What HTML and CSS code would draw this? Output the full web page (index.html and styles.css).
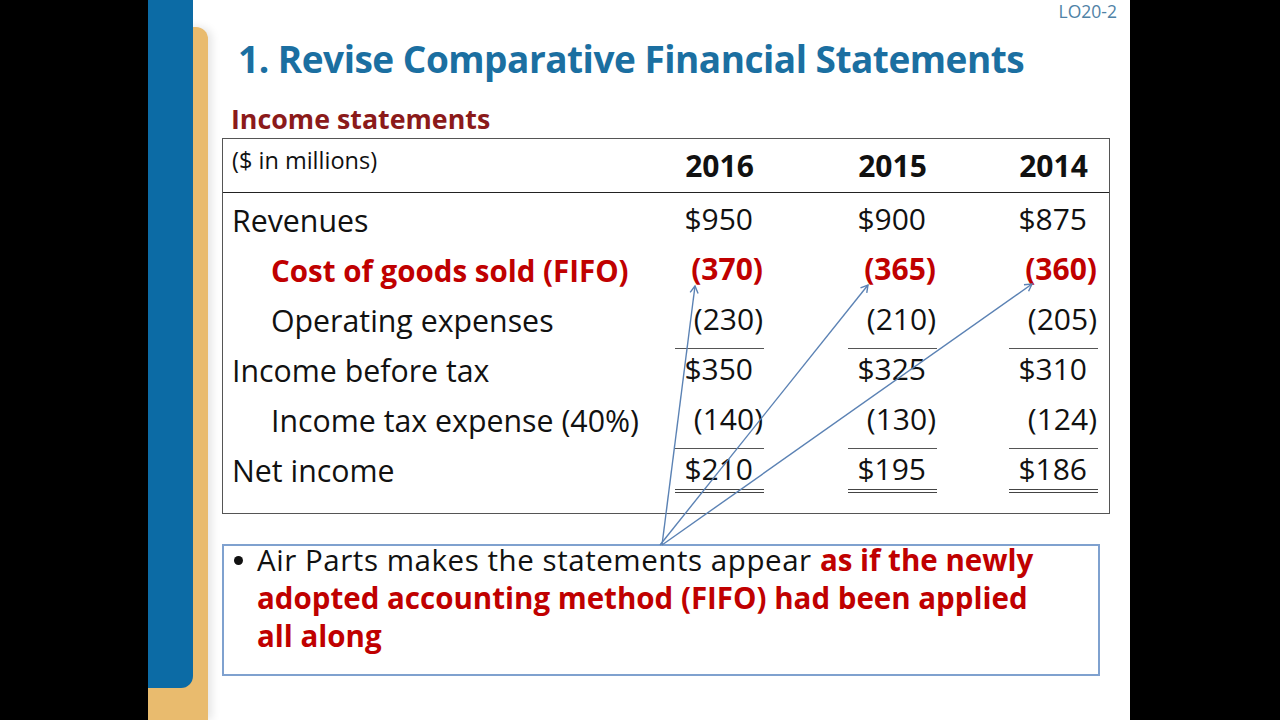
FILE: index.html
```html
<!DOCTYPE html>
<html>
<head>
<meta charset="utf-8">
<link rel="stylesheet" href="styles.css">
</head>
<body>
<div class="screen">
  <div class="bar-side"></div>
  <div class="slide">
    <div class="deco">
      <div class="deco-tan"></div>
      <div class="deco-blue"></div>
    </div>
    <div class="main">
      <div class="lo">LO20-2</div>
      <h1 class="title">1. Revise Comparative Financial Statements</h1>
      <h2 class="subtitle">Income statements</h2>
      <div class="table">
        <div class="thead grid">
          <div class="cell head-label">($ in millions)</div>
          <div class="cell year"><span class="num">2016</span></div>
          <div class="cell year"><span class="num">2015</span></div>
          <div class="cell year"><span class="num">2014</span></div>
        </div>
        <div class="tbody grid">
          <div class="cell label">Revenues</div>
          <div class="cell"><span class="num">$950</span></div>
          <div class="cell"><span class="num">$900</span></div>
          <div class="cell"><span class="num">$875</span></div>

          <div class="cell label indent red">Cost of goods sold (FIFO)</div>
          <div class="cell red"><span class="num">(370<span class="cp">)</span></span></div>
          <div class="cell red"><span class="num">(365<span class="cp">)</span></span></div>
          <div class="cell red"><span class="num">(360<span class="cp">)</span></span></div>

          <div class="cell label indent">Operating expenses</div>
          <div class="cell"><span class="num">(230<span class="cp">)</span></span></div>
          <div class="cell"><span class="num">(210<span class="cp">)</span></span></div>
          <div class="cell"><span class="num">(205<span class="cp">)</span></span></div>

          <div class="cell label">Income before tax</div>
          <div class="cell"><span class="num rule">$350</span></div>
          <div class="cell"><span class="num rule">$325</span></div>
          <div class="cell"><span class="num rule">$310</span></div>

          <div class="cell label indent">Income tax expense (40%)</div>
          <div class="cell"><span class="num">(140<span class="cp">)</span></span></div>
          <div class="cell"><span class="num">(130<span class="cp">)</span></span></div>
          <div class="cell"><span class="num">(124<span class="cp">)</span></span></div>

          <div class="cell label">Net income</div>
          <div class="cell"><span class="num rule dbl">$210</span></div>
          <div class="cell"><span class="num rule dbl">$195</span></div>
          <div class="cell"><span class="num rule dbl">$186</span></div>
        </div>
      </div>
      <div class="note">
        <p class="bullet"><span class="dot"></span><span class="btext">Air Parts makes the statements appear <b class="red">as if the newly<br>adopted accounting method (FIFO) had been applied<br>all along</b></span></p>
      </div>
    </div>
    <svg class="arrows" width="982" height="720" viewBox="148 0 982 720">
      <defs>
        <marker id="ah" markerWidth="10" markerHeight="10" refX="8" refY="5" orient="auto" markerUnits="userSpaceOnUse">
          <path d="M1,1 L8,5 L1,9" fill="none" stroke="#5b82b4" stroke-width="1.4"/>
        </marker>
      </defs>
      <line x1="662" y1="545" x2="695" y2="286" stroke="#5b82b4" stroke-width="1.4" marker-end="url(#ah)"/>
      <line x1="660" y1="545" x2="868" y2="285" stroke="#5b82b4" stroke-width="1.4" marker-end="url(#ah)"/>
      <line x1="662" y1="545" x2="1032" y2="284" stroke="#5b82b4" stroke-width="1.4" marker-end="url(#ah)"/>
    </svg>
  </div>
  <div class="bar-side right"></div>
</div>
</body>
</html>
```
FILE: styles.css
```css
html, body {
  margin: 0;
  padding: 0;
  background: #000;
}
.screen {
  display: flex;
  width: 1280px;
  height: 720px;
  overflow: hidden;
}
.bar-side {
  width: 148px;
  background: #000;
  flex: none;
}
.bar-side.right {
  width: 150px;
}
.slide {
  position: relative;
  width: 982px;
  height: 720px;
  background: #fff;
  display: flex;
  font-family: "Open Sans", Lato, sans-serif;
  color: #111;
}
.deco {
  display: grid;
  width: 60px;
  flex: none;
}
.deco-tan {
  grid-area: 1 / 1;
  margin-top: 27px;
  width: 60px;
  height: 693px;
  background: #e9bb6e;
  border-top-right-radius: 12px;
  box-shadow: 4px 0 8px rgba(0,0,0,0.10);
}
.deco-blue {
  grid-area: 1 / 1;
  width: 45px;
  height: 688px;
  background: #0c6ba5;
  border-bottom-right-radius: 12px;
  z-index: 1;
}
.main {
  flex: 1;
  padding-left: 14px;
  padding-right: 20px;
  display: flex;
  flex-direction: column;
}
.lo {
  text-align: right;
  font-size: 17.5px;
  color: #4f82a6;
  height: 22px;
  line-height: 22px;
  margin-right: -7px;
}
.title {
  margin: 15px 0 0 16px;
  font-size: 37px;
  letter-spacing: -0.5px;
  line-height: 44px;
  font-weight: 700;
  color: #1b6fa1;
}
.subtitle {
  margin: 23px 0 0 9px;
  font-size: 26.8px;
  line-height: 30px;
  font-weight: 700;
  color: #8b1a1a;
}
.table {
  margin-top: 4px;
  border: 1px solid #555;
  padding-bottom: 18px;
}
.grid {
  display: grid;
  grid-template-columns: 1fr 89px 173px 161px;
  padding: 0 11px 0 9px;
}
.thead {
  height: 53px;
  border-bottom: 1px solid #222;
  margin-bottom: 2px;
}
.tbody {
  grid-auto-rows: 50px;
  font-size: 30px;
}
.cell {
  display: flex;
  align-items: center;
  justify-content: flex-end;
  white-space: nowrap;
}
.cell.label {
  justify-content: flex-start;
  font-size: 30.3px;
}
.cell.label.red {
  font-size: 29.5px;
}
.cell.indent {
  padding-left: 39px;
}
.head-label {
  justify-content: flex-start;
  align-items: flex-start;
  padding-top: 6px;
  font-size: 23.5px;
  line-height: 30px;
}
.year {
  font-weight: 700;
  font-size: 30px;
  padding-top: 3px;
}
.year .num {
  text-align: center;
  padding-right: 0;
}
.num {
  display: block;
  width: 89px;
  box-sizing: border-box;
  text-align: right;
  padding-right: 11px;
  line-height: 40px;
  border-top: 1px solid transparent;
  border-bottom: 4px solid transparent;
}
.cp {
  margin-right: -10px;
}
.num.rule {
  border-top-color: #555;
}
.num.dbl {
  border-bottom: 4px double #444;
}
.red {
  color: #c00000;
  font-weight: 700;
}
.note {
  margin-top: 30px;
  width: 878px;
  height: 132px;
  box-sizing: border-box;
  border: 2px solid #7fa1cf;
}
.bullet {
  margin: -5px 0 0 0;
  padding-left: 9px;
  display: flex;
  font-size: 29.5px;
  line-height: 38px;
  white-space: nowrap;
  letter-spacing: 0.55px;
}
.bullet b {
  letter-spacing: 0;
}
.dot {
  flex: none;
  width: 9px;
  height: 9px;
  border-radius: 50%;
  background: #111;
  margin: 15px 14px 0 1px;
}
.arrows {
  position: absolute;
  left: 0;
  top: 0;
  pointer-events: none;
  z-index: 2;
}
```
